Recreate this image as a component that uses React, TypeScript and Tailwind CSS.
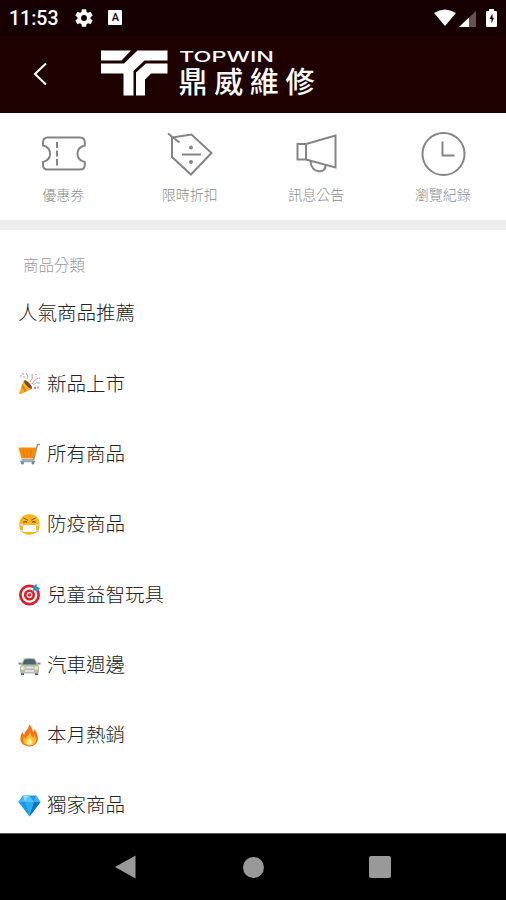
import type { ReactNode } from "react";

const quickLinks: { label: string; icon: ReactNode }[] = [
  {
    label: "優惠券",
    icon: (
      <>
        <path d="M5.5 7.5H38Q42.8 7.5 42.8 12.5V15.5C33 18 33 29.5 42.8 32V35Q42.8 39.5 38 39.5H5.5Q1 39.5 1 35V32C10.5 29.5 10.5 18 1 15.5V12.5Q1 7.5 5.5 7.5Z" />
        <path d="M15 12V18M15 20.5V26.5M15 29V35.5" />
      </>
    ),
  },
  {
    label: "限時折扣",
    icon: (
      <>
        <path d="M4 7.5L23.5 4.5L43.5 23L23 44.5L4 27ZM0 3.5L11.5 12.5" />
        <path d="M14 24.5H33" />
        <circle cx="23" cy="17.5" r="1" fill="#858585" />
        <circle cx="23" cy="32" r="1" fill="#858585" />
      </>
    ),
  },
  {
    label: "訊息公告",
    icon: (
      <>
        <path d="M2.5 14H11V29.5H2.5ZM11 14L40.5 5.5V37.5L11 29.5" />
        <path d="M15.5 31C15.5 44 31.5 44 30.5 35" />
      </>
    ),
  },
  {
    label: "瀏覽紀錄",
    icon: (
      <>
        <circle cx="22.5" cy="24" r="21" />
        <path d="M21.5 11.5V25.5H33.5" />
      </>
    ),
  },
];

const PartyIcon = () => (
  <>
    <path d="M6 8L1 21Q1 22.5 3 22L14 17Q13 10 6 8Z" fill="#f9ad22" />
    <path d="M4.5 12L9 19L6.5 20.2L3.5 15Z" fill="#e08a18" />
    <ellipse cx="10" cy="12.5" rx="1.8" ry="5.3" transform="rotate(-43 10 12.5)" fill="#7b4a2c" />
    <path d="M12 10Q15.5 7 14 2M14 12Q16 8 20 6" stroke="#f28484" strokeWidth="1" fill="none" />
    <path d="M9 7Q11 4 8 1M15 13Q18 10 22 11" stroke="#7abff0" strokeWidth="1" fill="none" />
    <g fill="#ef7777">
      <circle cx="3" cy="4" r=".8" />
      <circle cx="17" cy="16" r="1.2" />
      <circle cx="20" cy="15.5" r=".9" />
      <circle cx="6" cy="5" r=".8" />
    </g>
    <g fill="#72baf0">
      <circle cx="5" cy="1.8" r=".9" />
      <circle cx="18" cy="2.5" r=".8" />
      <circle cx="21.5" cy="6" r=".8" />
    </g>
  </>
);

const CartIcon = () => (
  <>
    <path d="M22 1.5H19.5L15.5 17H3.5" fill="none" stroke="#839aa8" strokeWidth="1.5" />
    <path d="M.5 4.5H18.5L16 15.5H3.5Z" fill="#f58a0b" />
    <path d="M5 7L6.5 14M9 7V14M13 7L12.5 14" stroke="#e0780a" strokeWidth=".8" />
    <path d="M2 18.5H17" stroke="#92a5b0" strokeWidth="1.5" />
    <circle cx="4.5" cy="20" r="1.5" fill="#6e8795" />
    <circle cx="15" cy="20" r="1.5" fill="#6e8795" />
  </>
);

const MaskIcon = () => (
  <>
    <circle cx="11.5" cy="11.5" r="10.5" fill="#fbb61c" />
    <path d="M5.5 5L9.5 7M17.5 5L13.5 7" stroke="#8a5412" strokeWidth="1" strokeLinecap="round" />
    <path d="M5.5 9.5Q7.5 7.5 9 9.5M14 9.5Q15.5 7.5 17.5 9.5" stroke="#704010" strokeWidth="1.2" fill="none" />
    <path d="M.5 11L6 13M22.5 11L17 13M2 18.5L6 17.5M21 18.5L17 17.5" stroke="#e3d9c8" strokeWidth="1.5" />
    <rect x="5" y="12" width="13" height="7" rx="1.5" fill="#fff" />
  </>
);

const TargetIcon = () => (
  <>
    <circle cx="11.5" cy="12" r="10.5" fill="#dc1f29" />
    <circle cx="11.5" cy="12" r="7.8" fill="#fff" />
    <circle cx="11.5" cy="12" r="5.6" fill="#dc1f29" />
    <circle cx="11.5" cy="12" r="2.9" fill="#fff" />
    <circle cx="11.5" cy="12" r="1.8" fill="#dc1f29" />
    <path d="M11.5 12L18 5" stroke="#5f7f8f" strokeWidth="1" />
    <path d="M15 7L15.5 3.5L18.5 .5L19 4L22.5 5L19.5 8Z" fill="#249bc7" />
  </>
);

const CarIcon = () => (
  <>
    <path d="M3 19H6V22H3ZM17 19H20V22H17Z" fill="#4c5355" />
    <path d="M6 5.5Q11.5 4 17 5.5L20 11.5L21 14V19Q21 20.5 19 20.5H4Q2 20.5 2 19V14L3 11.5Z" fill="#b4bbb5" />
    <path d="M6.5 6.5Q11.5 5.5 16.5 6.5L18.5 11.5H4.5Z" fill="#4b6566" />
    <path d="M.5 9.5H3.5V11.5H.5ZM19.5 9.5H22.5V11.5H19.5Z" fill="#7b8784" />
    <path d="M7.5 13.5H15.5V15.5H7.5ZM7 17H16V19H7Z" fill="#dfe2df" />
    <circle cx="4.8" cy="15" r="1.9" fill="#eeeb9a" />
    <circle cx="18.2" cy="15" r="1.9" fill="#eeeb9a" />
  </>
);

const FireIcon = () => (
  <>
    <path d="M11 .5C14.5 3 14 6 15.5 8C16.5 7 16.3 5.5 16 4.5C22 12 21.5 22 11.5 22.5C1.5 22 .5 14 4.5 8C5 9.5 5.5 10 6.5 10.5C6.5 7 11 5 11 .5Z" fill="#f37421" />
    <path d="M12 7C12 11 14 12 15 14L16.5 11.5C20 17 17 21.5 11.5 21.5C5.5 21 4 16.5 6 12.5L8 15C8.5 12 12 11 12 7Z" fill="#ffc12e" />
    <path d="M11.5 14C13 16 15 17 14 19.5C12.5 22 8.5 21 8.5 18.5C8.5 16.5 11 16 11.5 14Z" fill="#fff19b" />
  </>
);

const GemIcon = () => (
  <>
    <path d="M5 1.5H18L22.5 8L11.5 22.5L.5 8Z" fill="#1c98e5" />
    <path d="M5 1.5L7 8H.5ZM18 1.5L16 8H22.5Z" fill="#43b4f3" />
    <path d="M5 1.5H11.5L7 8Z" fill="#8bdcff" />
    <path d="M11.5 1.5L16 8H7Z" fill="#55c5fa" />
    <path d="M7 8H16L11.5 22.5Z" fill="#2badf0" />
    <path d="M16 8H22.5L11.5 22.5Z" fill="#0877c5" />
  </>
);

const categories: { name: string; icon?: ReactNode }[] = [
  { name: "人氣商品推薦" },
  { name: "新品上市", icon: <PartyIcon /> },
  { name: "所有商品", icon: <CartIcon /> },
  { name: "防疫商品", icon: <MaskIcon /> },
  { name: "兒童益智玩具", icon: <TargetIcon /> },
  { name: "汽車週邊", icon: <CarIcon /> },
  { name: "本月熱銷", icon: <FireIcon /> },
  { name: "獨家商品", icon: <GemIcon /> },
];

function StatusBar() {
  return (
    <div className="flex h-9 items-center bg-[#160001] pl-[9px] pr-[8px] text-white">
      <span className="mt-[1px] font-[Roboto,sans-serif] text-[19.5px] font-medium leading-none">11:53</span>
      <svg className="mb-[1px] ml-[15px] h-[22px] w-[22px]" viewBox="0 0 24 24" fill="#fff">
        <path d="M19.14 12.94c.04-.3.06-.61.06-.94s-.02-.64-.07-.94l2.03-1.58a.49.49 0 0 0 .12-.61l-1.92-3.32a.49.49 0 0 0-.59-.22l-2.39.96c-.5-.38-1.03-.7-1.62-.94l-.36-2.54a.48.48 0 0 0-.48-.41h-3.84a.48.48 0 0 0-.47.41l-.36 2.54c-.59.24-1.13.57-1.62.94l-2.39-.96a.49.49 0 0 0-.59.22L2.74 8.87a.48.48 0 0 0 .12.61l2.03 1.58c-.05.3-.09.63-.09.94s.02.64.07.94l-2.03 1.58a.49.49 0 0 0-.12.61l1.92 3.32c.12.22.37.29.59.22l2.39-.96c.5.38 1.03.7 1.62.94l.36 2.54c.05.24.24.41.48.41h3.84c.24 0 .44-.17.47-.41l.36-2.54c.59-.24 1.13-.56 1.62-.94l2.39.96c.22.08.47 0 .59-.22l1.92-3.32a.49.49 0 0 0-.12-.61zM12 15.2a3.2 3.2 0 1 1 0-6.4 3.2 3.2 0 0 1 0 6.4z" />
      </svg>
      <span className="mb-[1px] ml-[13px] flex h-[15px] w-[14px] items-center justify-center rounded-[1px] bg-white font-[Roboto,sans-serif] text-[11px] font-medium leading-none text-[#160001]">
        A
      </span>
      <svg className="mb-[1px] ml-auto h-[18px] w-[64px]" viewBox="0 0 64 18">
        <path d="M0 4Q10.5-3 22 4L11 17Z" fill="#fff" />
        <path d="M42 2V18H25Z" fill="#665052" />
        <path d="M35 8.6V18H25Z" fill="#fff" />
        <path d="M55 0H60V2H62Q63 2 63 3V17Q63 18 62 18H53Q52 18 52 17V3Q52 2 53 2H55Z" fill="#fff" />
        <path d="M58.5 4.5L55.5 10H57.5V14.5L60 8.8H58.5Z" fill="#160001" />
      </svg>
    </div>
  );
}

function Header() {
  return (
    <header className="flex h-[77px] items-start border-b border-[#100001] bg-[#1e0001] text-white">
      <svg className="ml-[33px] mt-[26px] h-6 w-[14px] shrink-0" viewBox="0 0 14 24" fill="none" stroke="#fff" strokeWidth="2.1">
        <path d="M13 1.5L2 12L13 22.5" />
      </svg>
      <svg className="ml-[54px] mt-[14px] h-[46px] w-[67px] shrink-0" viewBox="0 0 67 46" fill="#fff">
        <path d="M0 .5H30L20.5 10.5H0Z" />
        <path d="M0 13.5H23L36.5 .5H66.5V10.5H43.5L32.5 21V45.5H22.5V23.5H0Z" />
        <path d="M66.5 13.5V23.5H50L44 29.5V45.5H35V22.5L45 13.5Z" />
      </svg>
      <svg className="ml-[11px] mt-[10px] h-[56px] w-[140px] shrink-0" viewBox="0 0 140 56" fill="#fff">
        <text x="0" y="15.5" fontSize="15" textLength="95" lengthAdjust="spacingAndGlyphs" className="font-[Inter,sans-serif] font-medium">
          TOPWIN
        </text>
        <text x="-0.5" y="46.5" fontSize="29" textLength="136" className="font-['Noto_Sans_CJK_TC',sans-serif] font-medium">
          鼎威維修
        </text>
      </svg>
    </header>
  );
}

export default function App() {
  return (
    <div className="flex h-[900px] w-[506px] flex-col overflow-hidden bg-white font-['Noto_Sans_CJK_TC',sans-serif]">
      <StatusBar />
      <Header />

      {/* Quick links */}
      <nav className="grid h-[107px] shrink-0 grid-cols-4">
        {quickLinks.map((link) => (
          <div key={link.label} className="flex flex-col items-center pt-[17px]">
            <svg className="ml-[1px] h-[48px] w-[44px] overflow-visible" viewBox="0 0 44 48" fill="none" stroke="#858585" strokeWidth="2">
              {link.icon}
            </svg>
            <span className="mt-[6px] text-[14px] font-light leading-5 text-[#8c8c8c]">{link.label}</span>
          </div>
        ))}
      </nav>
      <div className="h-[10px] shrink-0 bg-[#eeeeee]" />

      {/* Categories */}
      <main className="min-h-0 flex-1 overflow-hidden">
        <h2 className="ml-[23px] mt-[22px] text-[15.5px] font-light leading-6 text-[#999999]">商品分類</h2>
        <ul className="mt-[2px]">
          {categories.map((c) => (
            <li key={c.name} className="flex h-[70.3px] items-start pl-[18px] pt-[20.4px] text-[19.5px] font-light leading-7 text-[#222222]">
              {c.icon && (
                <svg className="mr-[6px] mt-[3.6px] h-[23px] w-[23px] shrink-0" viewBox="0 0 23 23">
                  {c.icon}
                </svg>
              )}
              <span>{c.name}</span>
            </li>
          ))}
        </ul>
      </main>

      {/* Android navigation */}
      <footer className="flex h-[67px] shrink-0 items-center justify-between border-t border-[#555555] bg-black pl-[115px] pr-[115px]">
        <svg className="h-6 w-[21px]" viewBox="0 0 21 24" fill="#999">
          <path d="M20.5 .5V23.5L0 12Z" />
        </svg>
        <div className="ml-[1px] h-[21px] w-[21px] rounded-full bg-[#999999]" />
        <div className="h-[22px] w-[22px] rounded-[2px] bg-[#999999]" />
      </footer>
    </div>
  );
}
